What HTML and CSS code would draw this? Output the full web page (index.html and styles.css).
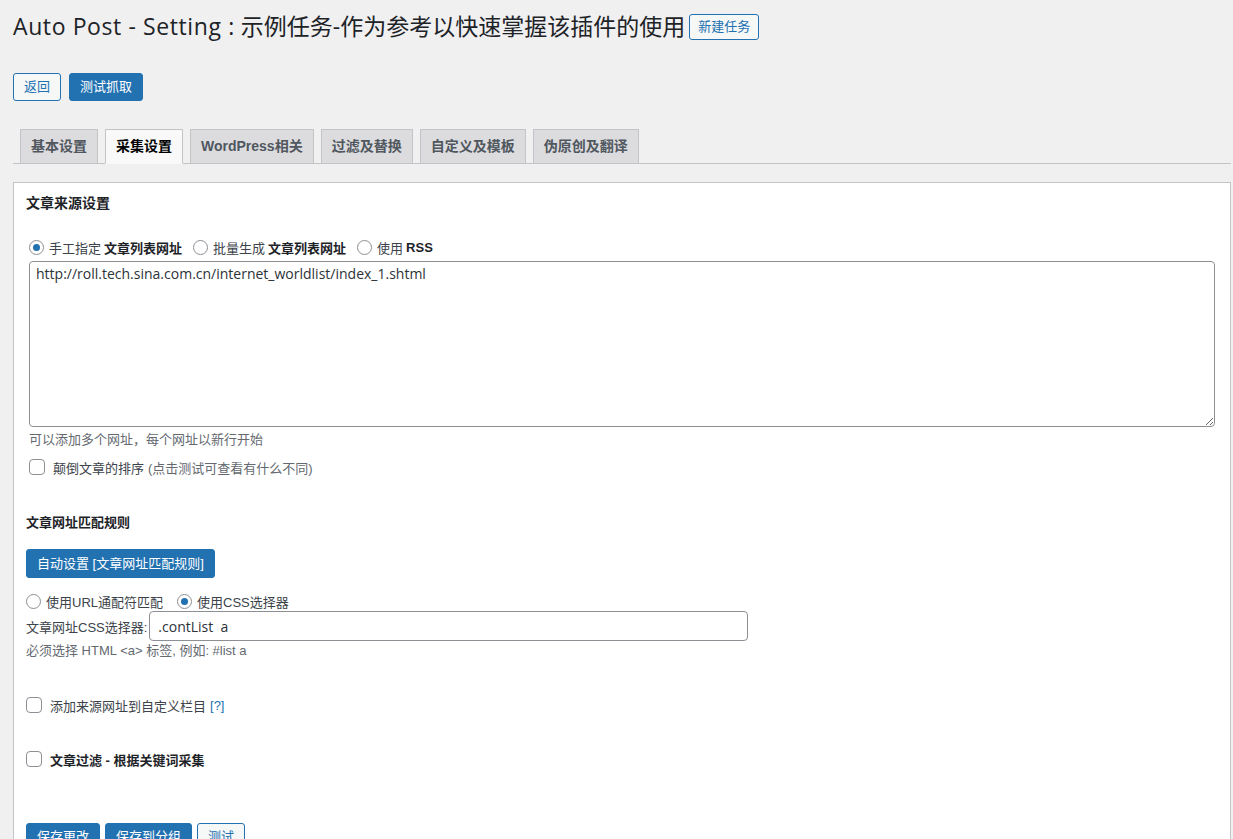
FILE: index.html
```html
<!DOCTYPE html>
<html lang="zh-CN">
<head>
<meta charset="utf-8">
<title>Auto Post - Setting</title>
<link rel="stylesheet" href="styles.css">
</head>
<body>
<div class="wrap">
  <div class="title-row">
    <h1 class="page-title"><span class="latin">Auto Post - Setting :</span> 示例任务-作为参考以快速掌握该插件的使用</h1>
    <a class="btn btn-secondary btn-small">新建任务</a>
  </div>

  <div class="action-row">
    <a class="btn btn-secondary">返回</a>
    <a class="btn btn-primary">测试抓取</a>
  </div>

  <nav class="tabs">
    <a class="tab">基本设置</a>
    <a class="tab tab-active">采集设置</a>
    <a class="tab">WordPress相关</a>
    <a class="tab">过滤及替换</a>
    <a class="tab">自定义及模板</a>
    <a class="tab">伪原创及翻译</a>
  </nav>

  <div class="panel">
    <h3 class="section-title">文章来源设置</h3>

    <div class="source-group">
      <div class="radio-row">
        <label class="opt"><span class="radio checked"></span>手工指定 <b>文章列表网址</b></label>
        <label class="opt"><span class="radio"></span>批量生成 <b>文章列表网址</b></label>
        <label class="opt"><span class="radio"></span>使用 <b>RSS</b></label>
      </div>
      <textarea class="url-box">http://roll.tech.sina.com.cn/internet_worldlist/index_1.shtml</textarea>
      <p class="help">可以添加多个网址，每个网址以新行开始</p>
      <label class="check-row"><span class="checkbox"></span>颠倒文章的排序 <span class="muted">(点击测试可查看有什么不同)</span></label>
    </div>

    <h4 class="sub-title">文章网址匹配规则</h4>
    <a class="btn btn-primary btn-auto">自动设置 [文章网址匹配规则]</a>

    <div class="radio-row radio-row-2">
      <label class="opt"><span class="radio"></span>使用URL通配符匹配</label>
      <label class="opt"><span class="radio checked"></span>使用CSS选择器</label>
    </div>
    <div class="field-row">
      <span class="field-label">文章网址CSS选择器:</span>
      <input class="text-input" type="text" value=".contList  a">
    </div>
    <p class="help help-2">必须选择 HTML &lt;a&gt; 标签, 例如: #list a</p>

    <label class="check-row check-row-a"><span class="checkbox"></span>添加来源网址到自定义栏目 <span class="link">[?]</span></label>
    <label class="check-row check-row-b"><span class="checkbox"></span><b>文章过滤 - 根据关键词采集</b></label>

    <div class="submit-row">
      <a class="btn btn-primary">保存更改</a>
      <a class="btn btn-primary">保存到分组</a>
      <a class="btn btn-secondary">测试</a>
    </div>
  </div>
</div>
</body>
</html>
```

FILE: styles.css
```css
html, body {
  margin: 0;
  padding: 0;
  background: #f0f0f1;
}

body {
  font-family: "Liberation Sans", "Noto Sans CJK SC", sans-serif;
  font-size: 13px;
  color: #3c434a;
  overflow: hidden;
}

.wrap {
  padding: 0 2px 0 13px;
}

.title-row {
  display: flex;
  align-items: center;
  gap: 4px;
  padding-top: 12px;
}

.page-title {
  margin: 0;
  font-family: "Open Sans", "Noto Sans CJK SC", sans-serif;
  font-size: 23px;
  font-weight: 400;
  line-height: 29px;
  color: #1d2327;
}

.page-title .latin {
  letter-spacing: 0.6px;
}

.btn {
  display: inline-flex;
  align-items: center;
  box-sizing: border-box;
  height: 28px;
  padding: 0 10px;
  border: 1px solid #2271b1;
  border-radius: 3px;
  font-size: 13px;
  line-height: 26px;
  text-decoration: none;
  white-space: nowrap;
}

.btn-secondary {
  background: #f6f7f7;
  color: #2271b1;
}

.btn-primary {
  background: #2271b1;
  color: #fff;
}

.btn-small {
  height: 26px;
  padding: 0 8px;
  font-size: 13px;
}

.action-row {
  display: flex;
  gap: 8px;
  margin-top: 32px;
}

.tabs {
  display: flex;
  gap: 7px;
  margin-top: 28px;
  padding-left: 7px;
  border-bottom: 1px solid #c3c4c7;
  height: 34px;
}

.tab {
  box-sizing: border-box;
  height: 35px;
  padding: 5px 10px;
  border: 1px solid #c3c4c7;
  background: #dcdcde;
  color: #50575e;
  font-size: 14px;
  font-weight: 700;
  line-height: 23px;
  white-space: nowrap;
}

.tab-active {
  background: #f9f9f9;
  border-bottom-color: #f9f9f9;
  color: #000;
}

.panel {
  margin-top: 18px;
  background: #fff;
  border: 1px solid #c3c4c7;
  padding: 10px 12px 20px;
  height: 700px;
}

.section-title {
  margin: 0;
  font-size: 14px;
  font-weight: 700;
  line-height: 20px;
  color: #1d2327;
}

.source-group {
  padding-left: 3px;
}

.radio-row {
  display: flex;
  gap: 11px;
  margin-top: 24px;
  height: 20px;
  align-items: center;
}

.opt {
  display: inline-flex;
  align-items: center;
  color: #3c434a;
}

.opt b {
  margin-left: 3px;
  color: #1d2327;
}

.radio {
  box-sizing: border-box;
  width: 15px;
  height: 15px;
  border: 1px solid #8c8f94;
  border-radius: 50%;
  margin: 0 5px 0 0;
  display: inline-flex;
  align-items: center;
  justify-content: center;
  background: #fff;
}

.radio.checked::after {
  content: "";
  width: 7px;
  height: 7px;
  border-radius: 50%;
  background: #2271b1;
}

.url-box {
  display: block;
  box-sizing: border-box;
  width: 1186px;
  height: 166px;
  margin-top: 4px;
  padding: 2px 6px;
  border: 1px solid #8c8f94;
  border-radius: 4px;
  font-family: "Open Sans", "Noto Sans CJK SC", sans-serif;
  font-size: 14px;
  line-height: 20px;
  color: #2c3338;
  resize: vertical;
}

.help {
  margin: 4px 0 0;
  line-height: 18px;
  color: #646970;
}

.check-row {
  display: flex;
  align-items: center;
  height: 20px;
  margin-top: 8px;
  color: #3c434a;
}

.checkbox {
  box-sizing: border-box;
  width: 16px;
  height: 16px;
  border: 1px solid #8c8f94;
  border-radius: 4px;
  margin-right: 8px;
  background: #fff;
  flex: none;
}

.muted {
  margin-left: 4px;
  color: #646970;
}

.sub-title {
  margin: 36px 0 0;
  font-size: 13px;
  font-weight: 700;
  line-height: 20px;
  color: #1d2327;
}

.btn-auto {
  height: 29px;
  margin-top: 16px;
}

.radio-row-2 {
  margin-top: 13px;
  gap: 14px;
}

.field-row {
  display: flex;
  align-items: center;
  gap: 2px;
}

.field-label {
  color: #3c434a;
}

.text-input {
  box-sizing: border-box;
  width: 599px;
  height: 30px;
  padding: 0 8px;
  border: 1px solid #8c8f94;
  border-radius: 4px;
  font-family: "Open Sans", "Noto Sans CJK SC", sans-serif;
  font-size: 14px;
  color: #2c3338;
}

.help-2 {
  margin-top: 1px;
}

.check-row-a {
  margin-top: 35px;
}

.check-row-b {
  margin-top: 34px;
}

.check-row-b b {
  color: #1d2327;
}

.link {
  margin-left: 4px;
  color: #2271b1;
}

.submit-row {
  display: flex;
  gap: 5px;
  margin-top: 54px;
}
```
